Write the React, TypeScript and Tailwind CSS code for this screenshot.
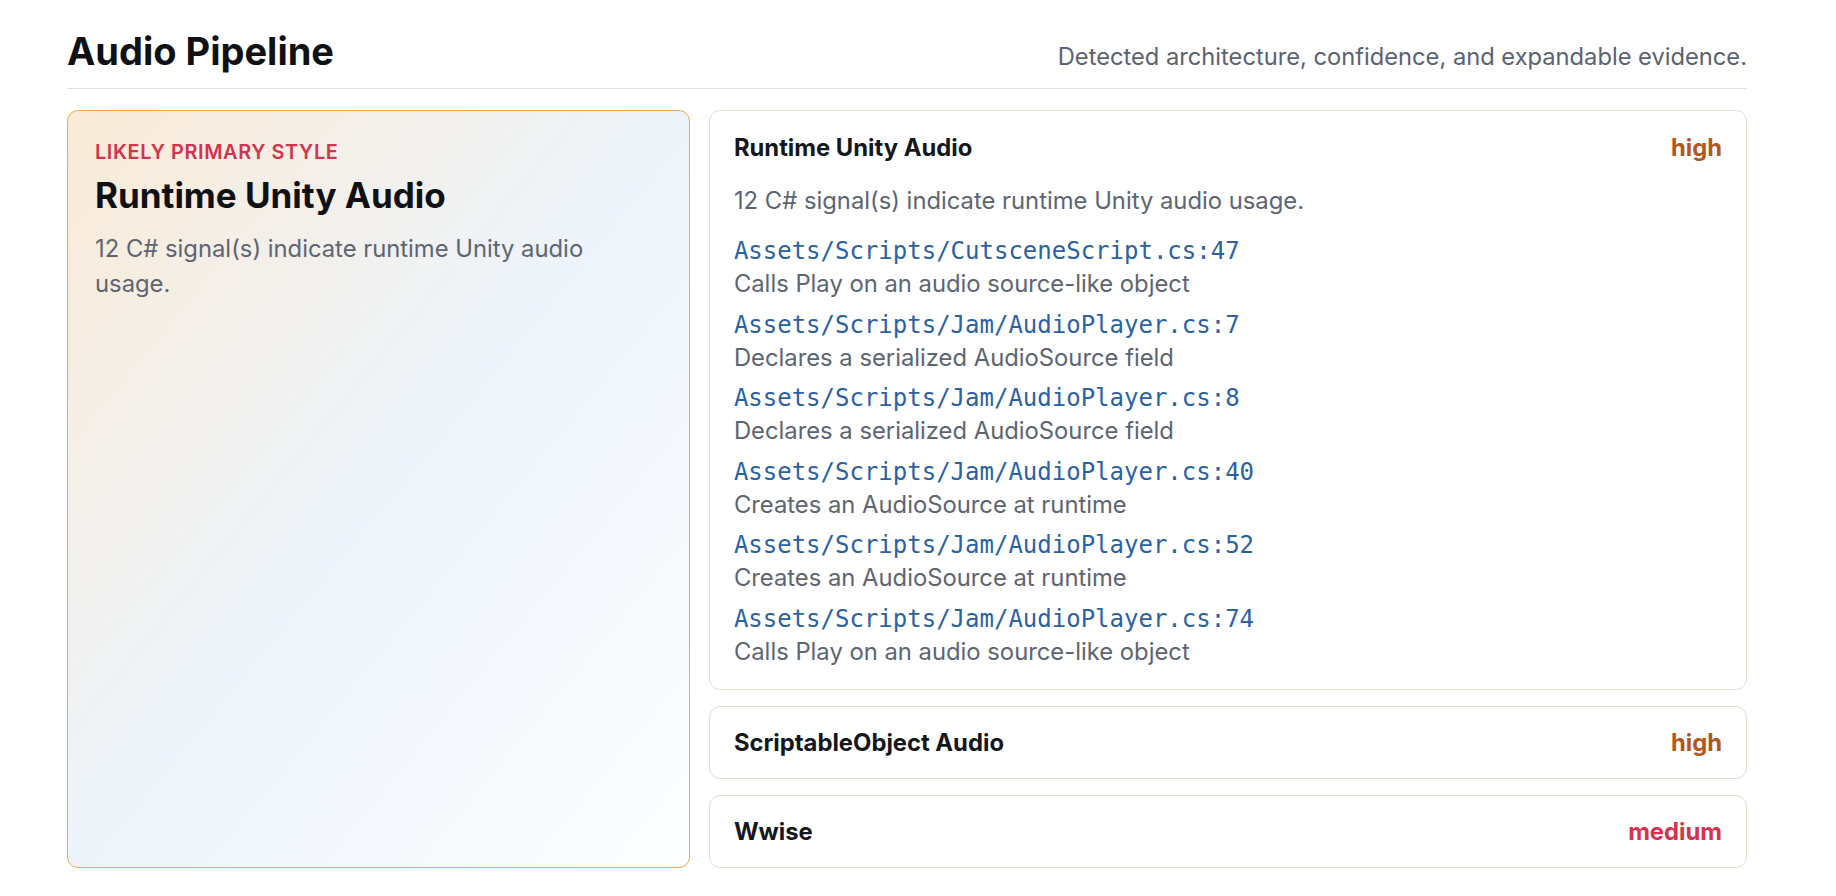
import React from 'react';

type Evidence = { path: string; note: string };

const evidence: Evidence[] = [
  { path: 'Assets/Scripts/CutsceneScript.cs:47', note: 'Calls Play on an audio source-like object' },
  { path: 'Assets/Scripts/Jam/AudioPlayer.cs:7', note: 'Declares a serialized AudioSource field' },
  { path: 'Assets/Scripts/Jam/AudioPlayer.cs:8', note: 'Declares a serialized AudioSource field' },
  { path: 'Assets/Scripts/Jam/AudioPlayer.cs:40', note: 'Creates an AudioSource at runtime' },
  { path: 'Assets/Scripts/Jam/AudioPlayer.cs:52', note: 'Creates an AudioSource at runtime' },
  { path: 'Assets/Scripts/Jam/AudioPlayer.cs:74', note: 'Calls Play on an audio source-like object' },
];

function Confidence({ level }: { level: 'high' | 'medium' }) {
  return (
    <span
      className={
        level === 'high'
          ? 'text-[23.8px] font-bold leading-[29px] text-[#b25620]'
          : 'text-[23.8px] font-bold leading-[29px] text-[#d2344d]'
      }
    >
      {level}
    </span>
  );
}

function CollapsedCard({ title, level }: { title: string; level: 'high' | 'medium' }) {
  return (
    <div className="flex items-center justify-between rounded-[11px] border border-[#e4ddd0] bg-white px-6 py-[21px]">
      <span className="text-[23.8px] font-bold leading-[29px] text-[#14171c]">{title}</span>
      <Confidence level={level} />
    </div>
  );
}

export default function App() {
  return (
    <div className="min-h-screen bg-white font-['Inter',sans-serif]">
      <div className="ml-[67px] w-[1680px] pt-[29px]">
        {/* Header */}
        <header className="flex items-baseline justify-between border-b border-[#dedede] pb-[15px]">
          <h1 className="text-[38px] font-bold leading-[44px] text-[#0f1114]">Audio Pipeline</h1>
          <p className="text-[23.7px] leading-[30px] text-[#5b6270]">
            Detected architecture, confidence, and expandable evidence.
          </p>
        </header>

        <div className="mt-[21px] grid grid-cols-[minmax(0,3fr)_minmax(0,5fr)] gap-[19px]">
          {/* Primary style */}
          <section className="rounded-[11px] border border-[#efab4c] bg-gradient-to-br from-[#faead6] via-[#edf4fb] to-[#fdfeff] px-[27px] pt-[29px]">
            <p className="text-[19.9px] font-semibold uppercase leading-[24px] tracking-[0.03em] text-[#d2344d]">
              Likely primary style
            </p>
            <h2 className="mt-[11px] text-[35px] font-bold leading-[40px] text-[#0f1114]">Runtime Unity Audio</h2>
            <p className="mt-[16px] max-w-[520px] text-[23.8px] leading-[35px] text-[#5d6573]">
              12 C# signal(s) indicate runtime Unity audio usage.
            </p>
          </section>

          {/* Detected styles */}
          <div className="flex flex-col gap-[16px]">
            <div className="rounded-[11px] border border-[#e4ddd0] bg-white px-6 pt-[22px] pb-[21px]">
              <div className="flex items-center justify-between">
                <span className="text-[23.8px] font-bold leading-[29px] text-[#14171c]">Runtime Unity Audio</span>
                <Confidence level="high" />
              </div>
              <p className="mt-[23px] text-[23.8px] leading-[32px] text-[#5d6573]">
                12 C# signal(s) indicate runtime Unity audio usage.
              </p>
              <ul className="mt-[17px] flex flex-col gap-[7.5px]">
                {evidence.map((e, i) => (
                  <li key={i}>
                    <div className="font-['DejaVu_Sans_Mono',monospace] text-[24px] leading-[34px] text-[#2a62a3]">
                      {e.path}
                    </div>
                    <div className="text-[23.8px] leading-[32px] text-[#5d6573]">{e.note}</div>
                  </li>
                ))}
              </ul>
            </div>
            <CollapsedCard title="ScriptableObject Audio" level="high" />
            <CollapsedCard title="Wwise" level="medium" />
          </div>
        </div>
      </div>
    </div>
  );
}
